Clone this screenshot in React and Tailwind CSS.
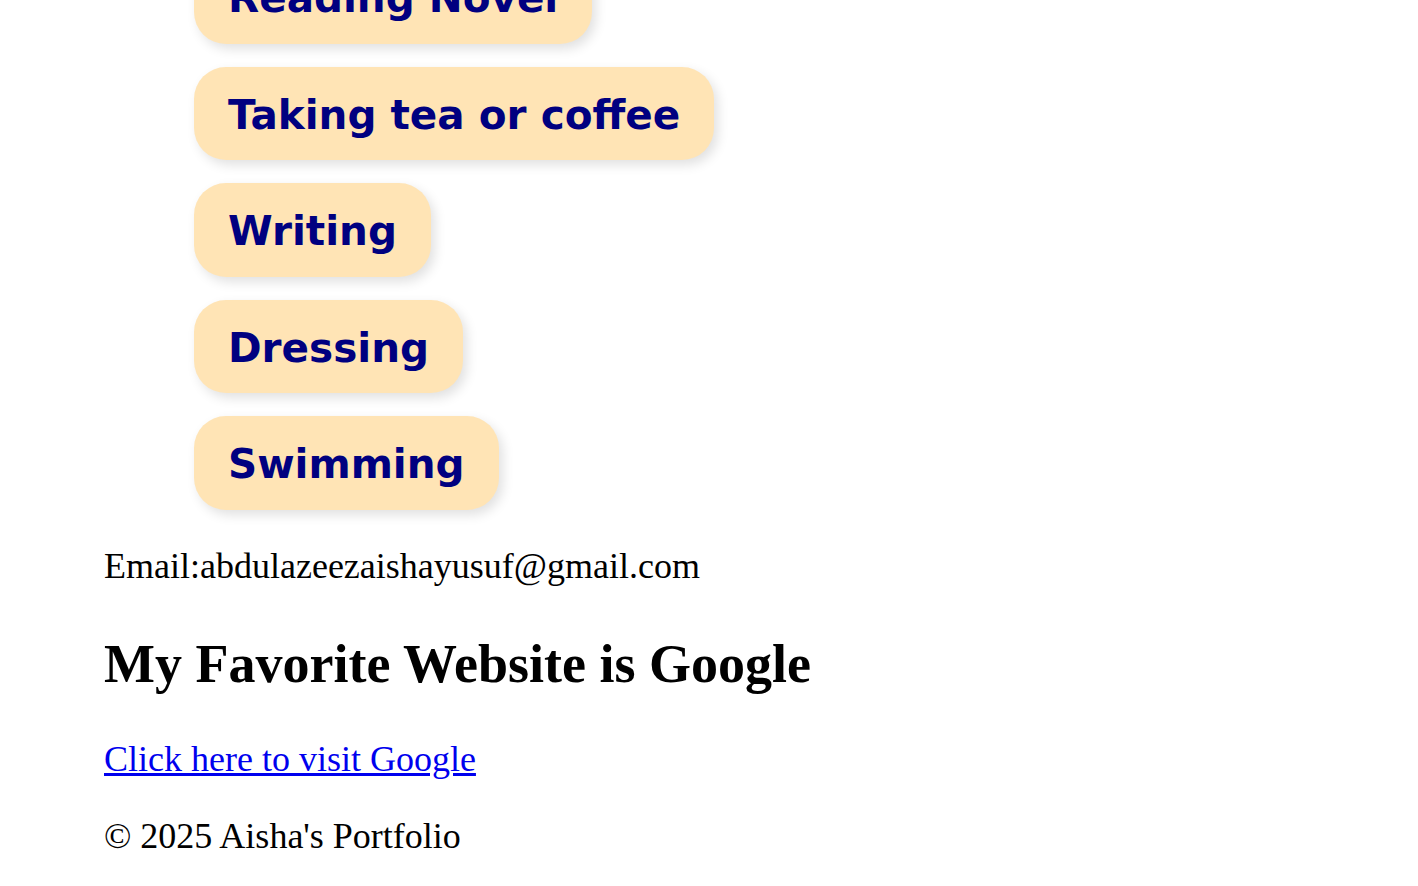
import React from 'react';

const hobbies = ['Reading Novel', 'Taking tea or coffee', 'Writing', 'Dressing', 'Swimming'];

export default function App() {
  return (
    <div className="min-h-screen bg-white text-black pl-[104px] font-['Liberation_Serif',serif] text-[36px] leading-[40px] overflow-hidden h-[886px]">
      <ul className="flex flex-col items-start gap-[23px] pl-[90px] -mt-[50px]">
        {hobbies.map((h) => (
          <li
            key={h}
            className="bg-[#ffe4b5] text-[#000080] font-['DejaVu_Sans',Verdana,sans-serif] font-bold text-[40.5px] leading-[47.5px] px-[34px] pt-[25px] pb-[21px] rounded-[32px] shadow-[4px_5px_12px_rgba(0,0,0,0.12)]"
          >
            {h}
          </li>
        ))}
      </ul>

      <p className="mt-[36px]">Email:abdulazeezaishayusuf@gmail.com</p>

      <h2 className="text-[54px] leading-[60px] font-bold mt-[48px] mb-[45px]">My Favorite Website is Google</h2>

      <p>
        <a href="#" className="text-[#0000ee] underline">
          Click here to visit Google
        </a>
      </p>

      <p className="mt-[37px]">© 2025 Aisha's Portfolio</p>
    </div>
  );
}
